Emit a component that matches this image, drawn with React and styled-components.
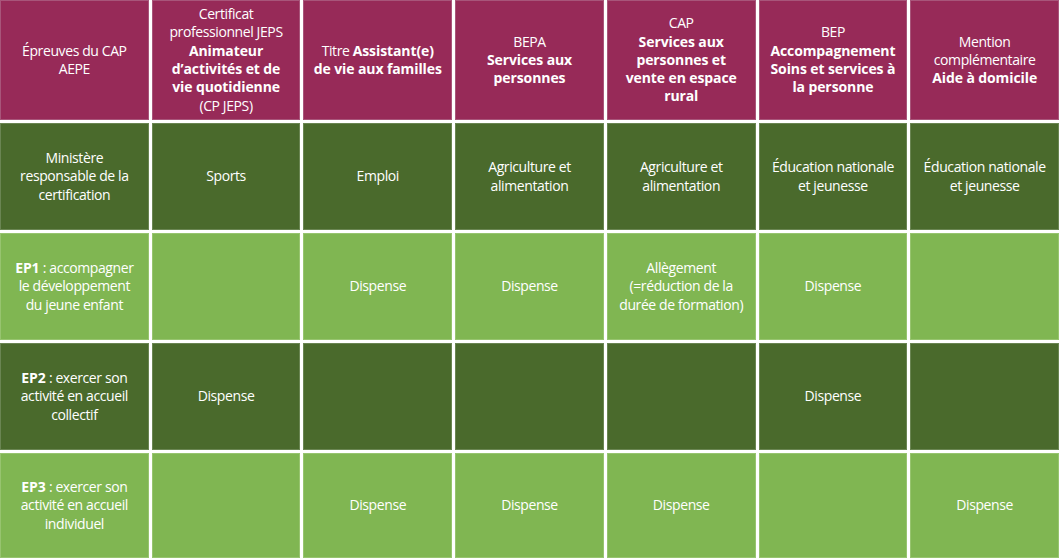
import React from 'react';
import styled, { createGlobalStyle } from 'styled-components';

const GlobalStyle = createGlobalStyle`
  html, body {
    margin: 0;
    padding: 0;
    background: #FFFFFF;
  }
`;

const TONES = {
  header: { bg: '#972A58', edge: '#A8557A' },
  dark: { bg: '#4A6A2C', edge: '#6A8552' },
  light: { bg: '#80B652', edge: '#97C46F' },
};

const Table = styled.div`
  width: 1059px;
  height: 558px;
  display: grid;
  grid-template-columns: repeat(7, 1fr);
  grid-template-rows: 120px repeat(3, 107px) 1fr;
  gap: 3px;
  background: #FFFFFF;
  font-family: "Open Sans", "Liberation Sans", sans-serif;
`;

const Cell = styled.div`
  box-sizing: border-box;
  display: flex;
  align-items: center;
  justify-content: center;
  padding: 0 4px;
  background: ${(p) => TONES[p.$tone].bg};
  border: 1px solid ${(p) => TONES[p.$tone].edge};
  color: #FFFFFF;
  font-size: 14px;
  line-height: 18.3px;
  letter-spacing: -0.4px;
  text-align: center;
  white-space: nowrap;
`;

const Strong = styled.strong`
  font-weight: 700;
  letter-spacing: -0.1px;
`;

const header = [
  <>Épreuves du CAP<br />AEPE</>,
  <>Certificat<br />professionnel JEPS<br /><Strong>Animateur<br />d’activités et de<br />vie quotidienne</Strong><br />(CP JEPS)</>,
  <>Titre <Strong>Assistant(e)<br />de vie aux familles</Strong></>,
  <>BEPA<br /><Strong>Services aux<br />personnes</Strong></>,
  <>CAP<br /><Strong>Services aux<br />personnes et<br />vente en espace<br />rural</Strong></>,
  <>BEP<br /><Strong>Accompagnement<br />Soins et services à<br />la personne</Strong></>,
  <>Mention<br />complémentaire<br /><Strong>Aide à domicile</Strong></>,
];

const D = 'Dispense';

const rows = [
  {
    tone: 'dark',
    cells: [
      <>Ministère<br />responsable de la<br />certification</>,
      'Sports',
      'Emploi',
      <>Agriculture et<br />alimentation</>,
      <>Agriculture et<br />alimentation</>,
      <>Éducation nationale<br />et jeunesse</>,
      <>Éducation nationale<br />et jeunesse</>,
    ],
  },
  {
    tone: 'light',
    cells: [
      <><Strong>EP1</Strong> : accompagner<br />le développement<br />du jeune enfant</>,
      '',
      D,
      D,
      <>Allègement<br />(=réduction de la<br />durée de formation)</>,
      D,
      '',
    ],
  },
  {
    tone: 'dark',
    cells: [
      <><Strong>EP2</Strong> : exercer son<br />activité en accueil<br />collectif</>,
      D,
      '',
      '',
      '',
      D,
      '',
    ],
  },
  {
    tone: 'light',
    cells: [
      <><Strong>EP3</Strong> : exercer son<br />activité en accueil<br />individuel</>,
      '',
      D,
      D,
      D,
      '',
      D,
    ],
  },
];

const App = () => {
  return (
    <>
      <GlobalStyle />
      <Table>
        {header.map((content, i) => (
          <Cell key={`h${i}`} $tone="header">
            <span>{content}</span>
          </Cell>
        ))}
        {rows.map((row, r) =>
          row.cells.map((content, c) => (
            <Cell key={`${r}-${c}`} $tone={row.tone}>
              <span>{content}</span>
            </Cell>
          ))
        )}
      </Table>
    </>
  );
};

export default App;
